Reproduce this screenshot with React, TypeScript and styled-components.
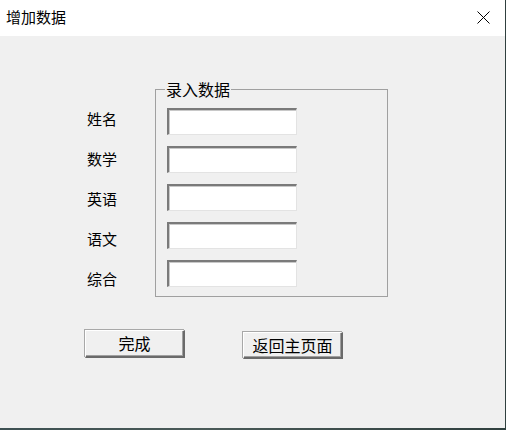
import React from 'react';
import styled, { createGlobalStyle } from 'styled-components';

const GlobalStyle = createGlobalStyle`
  html, body {
    margin: 0;
    padding: 0;
    background: #3b4a4c;
  }
  * {
    box-sizing: border-box;
  }
`;

const Screen = styled.div`
  width: 506px;
  height: 430px;
  background: linear-gradient(90deg, #3d5052, #4a5a58 40%, #30403f);
  overflow: hidden;
`;

const Window = styled.div`
  width: 505px;
  height: 428px;
  display: flex;
  flex-direction: column;
  background: #f0f0f0;
  font-family: "Noto Sans CJK SC", "Noto Sans", sans-serif;
  color: #000;
`;

const TitleBar = styled.div`
  height: 36px;
  flex: 0 0 36px;
  background: #fff;
  display: flex;
  align-items: center;
  justify-content: space-between;
  padding: 0 15px 0 6px;
`;

const Title = styled.span`
  font-size: 15px;
  line-height: 18px;
  margin-top: -2px;
`;

const CloseButton = styled.div`
  width: 14px;
  height: 14px;
  display: flex;
  align-items: center;
  justify-content: center;
  margin-top: -1px;
`;

const Body = styled.div`
  flex: 1;
  padding: 45px 0 0 85px;
  display: flex;
  flex-direction: column;
`;

const FormArea = styled.div`
  display: grid;
  grid-template-columns: 70px 233px;
`;

const LabelColumn = styled.div`
  display: flex;
  flex-direction: column;
  gap: 13px;
  padding: 24px 0 0 2px;
`;

const Label = styled.div`
  height: 27px;
  display: flex;
  align-items: center;
  font-size: 15px;
  line-height: 16px;
`;

const GroupBox = styled.fieldset`
  margin: 0;
  padding: 11px 0 9px 11px;
  border: 1px solid #a0a0a0;
  display: flex;
  flex-direction: column;
  gap: 11px;
`;

const Legend = styled.legend`
  font-size: 16px;
  line-height: 16px;
  padding: 0 1px;
  margin-left: -2px;
`;

const Field = styled.input`
  width: 130px;
  height: 27px;
  margin: 0;
  padding: 0 3px;
  background: #fff;
  border-style: solid;
  border-width: 2px 1px 1px 2px;
  border-color: #7a7a7a #e3e3e3 #e3e3e3 #7a7a7a;
  box-shadow: inset 1px 1px 0 #c8c8c8;
  font-family: inherit;
  font-size: 14px;
  outline: none;
`;

const ButtonRow = styled.div`
  display: flex;
  align-items: flex-start;
  gap: 58px;
  margin-top: 33px;
`;

const Button = styled.button<{ $drop?: number; $h?: number }>`
  width: 100px;
  height: ${(p) => p.$h ?? 28}px;
  margin: ${(p) => p.$drop ?? 0}px 0 0 0;
  padding: 0;
  background: #f0f0f0;
  border-style: solid;
  border-width: 1px 2px 2px 1px;
  border-color: #fff #6a6a6a #6a6a6a #fff;
  box-shadow: inset -1px -1px 0 #a0a0a0, -1px -1px 0 #a8a8a8;
  font-family: "Noto Sans CJK SC", "Noto Sans", sans-serif;
  font-size: 16px;
  line-height: 17px;
  color: #000;
  display: flex;
  align-items: center;
  justify-content: center;
`;

const subjects = ['姓名', '数学', '英语', '语文', '综合'];

export default function App() {
  return (
    <Screen>
      <GlobalStyle />
      <Window>
        <TitleBar>
          <Title>增加数据</Title>
          <CloseButton>
            <svg width="13" height="13" viewBox="0 0 13 13">
              <path d="M0.5 0.5 L12.5 12.5 M12.5 0.5 L0.5 12.5" stroke="#000" strokeWidth="1" fill="none" />
            </svg>
          </CloseButton>
        </TitleBar>
        <Body>
          <FormArea>
            <LabelColumn>
              {subjects.map((s) => (
                <Label key={s}>{s}</Label>
              ))}
            </LabelColumn>
            <GroupBox>
              <Legend>录入数据</Legend>
              {subjects.map((s) => (
                <Field key={s} />
              ))}
            </GroupBox>
          </FormArea>
          <ButtonRow>
            <Button>完成</Button>
            <Button $drop={2} $h={27}>返回主页面</Button>
          </ButtonRow>
        </Body>
      </Window>
    </Screen>
  );
}
